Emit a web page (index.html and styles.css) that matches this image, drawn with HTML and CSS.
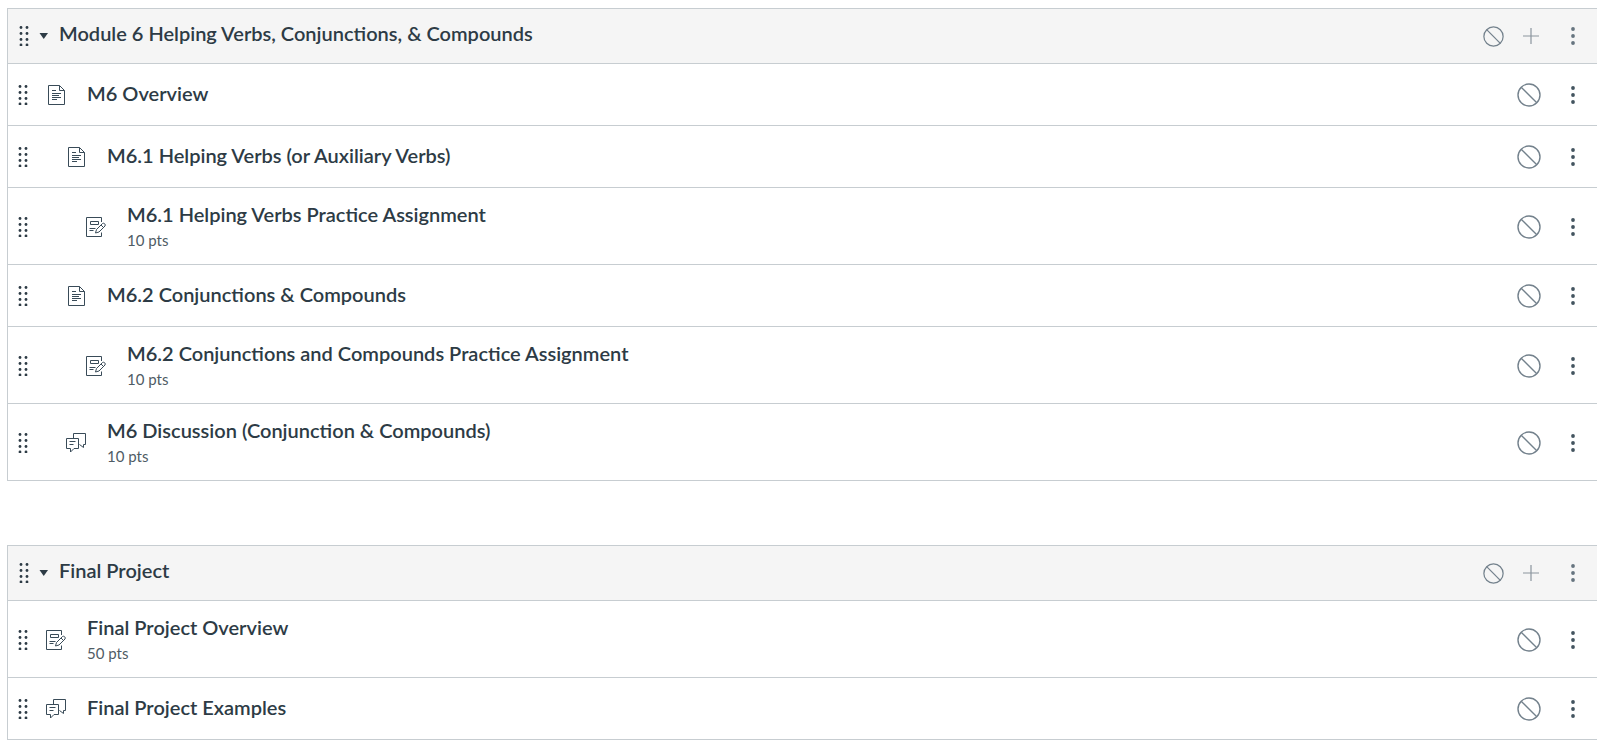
FILE: index.html
```html
<!DOCTYPE html>
<html lang="en">
<head>
<meta charset="utf-8">
<meta name="viewport" content="width=device-width, initial-scale=1">
<title>Modules</title>
<link rel="stylesheet" href="styles.css">
</head>
<body>
<svg class="sprite" aria-hidden="true">
  <symbol id="grip" viewBox="0 0 10 20"><g fill="currentColor"><circle cx="2" cy="1.5" r="1.4"/><circle cx="8" cy="1.5" r="1.4"/><circle cx="2" cy="7.5" r="1.4"/><circle cx="8" cy="7.5" r="1.4"/><circle cx="2" cy="13.5" r="1.4"/><circle cx="8" cy="13.5" r="1.4"/><circle cx="2" cy="19" r="1.4"/><circle cx="8" cy="19" r="1.4"/></g></symbol>
  <symbol id="caret" viewBox="0 0 10 6"><path d="M0.5 0h8.5L4.75 6z" fill="currentColor"/></symbol>
  <symbol id="page" viewBox="0 0 20 20"><path d="M2.500.5h11l5 5v14h-16zM13.500.5v5h5M6 5.500h4M6 8.500h9M6 10.500h7M6 12.500h9M6 14.500h5" fill="none" stroke="currentColor"/></symbol>
  <symbol id="assignment" viewBox="0 0 20 20"><path d="M15.500 5V.5H.5v19h15v-4M4.500 4.500h8v3h-8zM3.500 11.500h6M3.500 13.500h4M9.500 16l1-3.500 6-6q1.200-.7 2.200.3t.3 2.200l-6 6zM15 8l2.500 2.500" fill="none" stroke="currentColor"/></symbol>
  <symbol id="discussion" viewBox="0 0 20 20"><path d="M7.500 5V.5h12v11h-2v3l-4-3M.5 5.500h12v10H8L4.500 19v-3.500h-4zM3.500 8.500h6M3.500 11.500h4" fill="none" stroke="currentColor"/></symbol>
  <symbol id="ban" viewBox="0 0 24 24"><circle cx="12" cy="12" r="11" fill="none" stroke="currentColor" stroke-width="1.400"/><path d="M4.200 4.200l15.600 15.600" stroke="currentColor" stroke-width="1.400"/></symbol>
  <symbol id="plus" viewBox="0 0 16 16"><path d="M8 0v16M0 8h16" stroke="currentColor" stroke-width="1.200"/></symbol>
  <symbol id="kebab" viewBox="0 0 4 18"><g fill="currentColor"><circle cx="2" cy="2" r="1.900"/><circle cx="2" cy="9" r="1.900"/><circle cx="2" cy="16" r="1.900"/></g></symbol>
</svg>
<main class="modules">
  <section class="module" aria-labelledby="module-6">
    <header class="module-header">
      <button class="handle" aria-label="Move module"><svg class="icon-grip"><use href="#grip"/></svg></button>
      <button class="toggle" aria-label="Collapse module" aria-expanded="true"><svg class="icon-caret"><use href="#caret"/></svg></button>
      <h2 class="module-title" id="module-6">Module 6 Helping Verbs, Conjunctions, &amp; Compounds</h2>
      <div class="actions">
        <button class="publish" aria-label="Publish module"><svg class="icon-ban"><use href="#ban"/></svg></button>
        <button class="add" aria-label="Add item"><svg class="icon-plus"><use href="#plus"/></svg></button>
        <button class="menu" aria-label="Module options"><svg class="icon-kebab"><use href="#kebab"/></svg></button>
      </div>
    </header>
    <ul class="items">
      <li class="item">
        <button class="handle" aria-label="Move item"><svg class="icon-grip"><use href="#grip"/></svg></button>
        <svg class="icon-type" aria-hidden="true"><use href="#page"/></svg>
        <div class="info"><a class="title" href="#">M6 Overview</a></div>
        <div class="actions">
          <button class="publish" aria-label="Publish item"><svg class="icon-ban"><use href="#ban"/></svg></button>
          <button class="menu" aria-label="Item options"><svg class="icon-kebab"><use href="#kebab"/></svg></button>
        </div>
      </li>
      <li class="item indent-1">
        <button class="handle" aria-label="Move item"><svg class="icon-grip"><use href="#grip"/></svg></button>
        <svg class="icon-type" aria-hidden="true"><use href="#page"/></svg>
        <div class="info"><a class="title" href="#">M6.1 Helping Verbs (or Auxiliary Verbs)</a></div>
        <div class="actions">
          <button class="publish" aria-label="Publish item"><svg class="icon-ban"><use href="#ban"/></svg></button>
          <button class="menu" aria-label="Item options"><svg class="icon-kebab"><use href="#kebab"/></svg></button>
        </div>
      </li>
      <li class="item indent-2">
        <button class="handle" aria-label="Move item"><svg class="icon-grip"><use href="#grip"/></svg></button>
        <svg class="icon-type" aria-hidden="true"><use href="#assignment"/></svg>
        <div class="info"><a class="title" href="#">M6.1 Helping Verbs Practice Assignment</a><span class="points">10 pts</span></div>
        <div class="actions">
          <button class="publish" aria-label="Publish item"><svg class="icon-ban"><use href="#ban"/></svg></button>
          <button class="menu" aria-label="Item options"><svg class="icon-kebab"><use href="#kebab"/></svg></button>
        </div>
      </li>
      <li class="item indent-1">
        <button class="handle" aria-label="Move item"><svg class="icon-grip"><use href="#grip"/></svg></button>
        <svg class="icon-type" aria-hidden="true"><use href="#page"/></svg>
        <div class="info"><a class="title" href="#">M6.2 Conjunctions &amp; Compounds</a></div>
        <div class="actions">
          <button class="publish" aria-label="Publish item"><svg class="icon-ban"><use href="#ban"/></svg></button>
          <button class="menu" aria-label="Item options"><svg class="icon-kebab"><use href="#kebab"/></svg></button>
        </div>
      </li>
      <li class="item indent-2">
        <button class="handle" aria-label="Move item"><svg class="icon-grip"><use href="#grip"/></svg></button>
        <svg class="icon-type" aria-hidden="true"><use href="#assignment"/></svg>
        <div class="info"><a class="title" href="#">M6.2 Conjunctions and Compounds Practice Assignment</a><span class="points">10 pts</span></div>
        <div class="actions">
          <button class="publish" aria-label="Publish item"><svg class="icon-ban"><use href="#ban"/></svg></button>
          <button class="menu" aria-label="Item options"><svg class="icon-kebab"><use href="#kebab"/></svg></button>
        </div>
      </li>
      <li class="item indent-1">
        <button class="handle" aria-label="Move item"><svg class="icon-grip"><use href="#grip"/></svg></button>
        <svg class="icon-type" aria-hidden="true"><use href="#discussion"/></svg>
        <div class="info"><a class="title" href="#">M6 Discussion (Conjunction &amp; Compounds)</a><span class="points">10 pts</span></div>
        <div class="actions">
          <button class="publish" aria-label="Publish item"><svg class="icon-ban"><use href="#ban"/></svg></button>
          <button class="menu" aria-label="Item options"><svg class="icon-kebab"><use href="#kebab"/></svg></button>
        </div>
      </li>
    </ul>
  </section>
  <section class="module" aria-labelledby="final-project">
    <header class="module-header">
      <button class="handle" aria-label="Move module"><svg class="icon-grip"><use href="#grip"/></svg></button>
      <button class="toggle" aria-label="Collapse module" aria-expanded="true"><svg class="icon-caret"><use href="#caret"/></svg></button>
      <h2 class="module-title" id="final-project">Final Project</h2>
      <div class="actions">
        <button class="publish" aria-label="Publish module"><svg class="icon-ban"><use href="#ban"/></svg></button>
        <button class="add" aria-label="Add item"><svg class="icon-plus"><use href="#plus"/></svg></button>
        <button class="menu" aria-label="Module options"><svg class="icon-kebab"><use href="#kebab"/></svg></button>
      </div>
    </header>
    <ul class="items">
      <li class="item">
        <button class="handle" aria-label="Move item"><svg class="icon-grip"><use href="#grip"/></svg></button>
        <svg class="icon-type" aria-hidden="true"><use href="#assignment"/></svg>
        <div class="info"><a class="title" href="#">Final Project Overview</a><span class="points">50 pts</span></div>
        <div class="actions">
          <button class="publish" aria-label="Publish item"><svg class="icon-ban"><use href="#ban"/></svg></button>
          <button class="menu" aria-label="Item options"><svg class="icon-kebab"><use href="#kebab"/></svg></button>
        </div>
      </li>
      <li class="item">
        <button class="handle" aria-label="Move item"><svg class="icon-grip"><use href="#grip"/></svg></button>
        <svg class="icon-type" aria-hidden="true"><use href="#discussion"/></svg>
        <div class="info"><a class="title" href="#">Final Project Examples</a></div>
        <div class="actions">
          <button class="publish" aria-label="Publish item"><svg class="icon-ban"><use href="#ban"/></svg></button>
          <button class="menu" aria-label="Item options"><svg class="icon-kebab"><use href="#kebab"/></svg></button>
        </div>
      </li>
    </ul>
  </section>
</main>
</body>
</html>
```

FILE: styles.css
```css
* {
  box-sizing: border-box;
}

body {
  margin: 0;
  background: #fff;
  color: #2d3b45;
  font-family: Lato, sans-serif;
}

svg {
  display: block;
  flex: none;
}

button {
  display: flex;
  align-items: center;
  justify-content: center;
  flex: none;
  margin: 0;
  padding: 0;
  border: 0;
  background: none;
  color: inherit;
  cursor: pointer;
}

.sprite {
  position: absolute;
  width: 0;
  height: 0;
}

.modules {
  display: flex;
  flex-direction: column;
  gap: 64px;
  padding: 8px 5px 5px 7px;
}

.module {
  border: 1px solid #c7cdd1;
  border-right: 0;
  border-bottom: 0;
}

.module-header,
.item {
  display: flex;
  align-items: center;
  border-bottom: 1px solid #c7cdd1;
}

.module-header {
  padding: 11px 22px 11px 11px;
  background: #f5f5f5;
}

.module-title {
  flex: 1;
  margin: 0;
  padding-bottom: 6px;
  font-size: 20px;
  font-weight: 600;
  line-height: 26px;
}

.toggle {
  width: 30px;
  height: 30px;
}

.items {
  margin: 0;
  padding: 0;
  list-style: none;
}

.item {
  padding: 13px 22px 12px 10px;
}

.icon-type {
  width: 20px;
  height: 20px;
  margin: 0 21px 0 18px;
  color: #394b58;
}

.indent-1 .icon-type {
  margin-left: 38px;
}

.indent-2 .icon-type {
  margin-left: 58px;
}

.info {
  display: flex;
  flex: 1;
  flex-direction: column;
  align-items: flex-start;
  padding: 4px 0 7px;
}

.title {
  color: inherit;
  font-size: 20px;
  font-weight: 600;
  line-height: 25px;
  text-decoration: none;
}

.info:has(.points) {
  padding: 1px 0 0;
}

.points {
  padding-top: 1px;
  color: #4f5c65;
  font-size: 15px;
  line-height: 24px;
}

.actions {
  display: flex;
  align-items: center;
}

.publish {
  width: 24px;
  color: #73818c;
}

.add {
  width: 16px;
  margin: 0 32px 0 18px;
  color: #8b959e;
}

.menu {
  width: 4px;
  color: #43545f;
}

.item .menu {
  margin-left: 30px;
}

.icon-grip {
  width: 10px;
  height: 20px;
}

.icon-caret {
  width: 10px;
  height: 6px;
}

.icon-ban {
  width: 24px;
  height: 24px;
}

.module-header .icon-ban {
  width: 21px;
  height: 21px;
}

.module-header .menu {
  color: #66747f;
}

.icon-plus {
  width: 16px;
  height: 16px;
}

.icon-kebab {
  width: 4px;
  height: 18px;
}
```
